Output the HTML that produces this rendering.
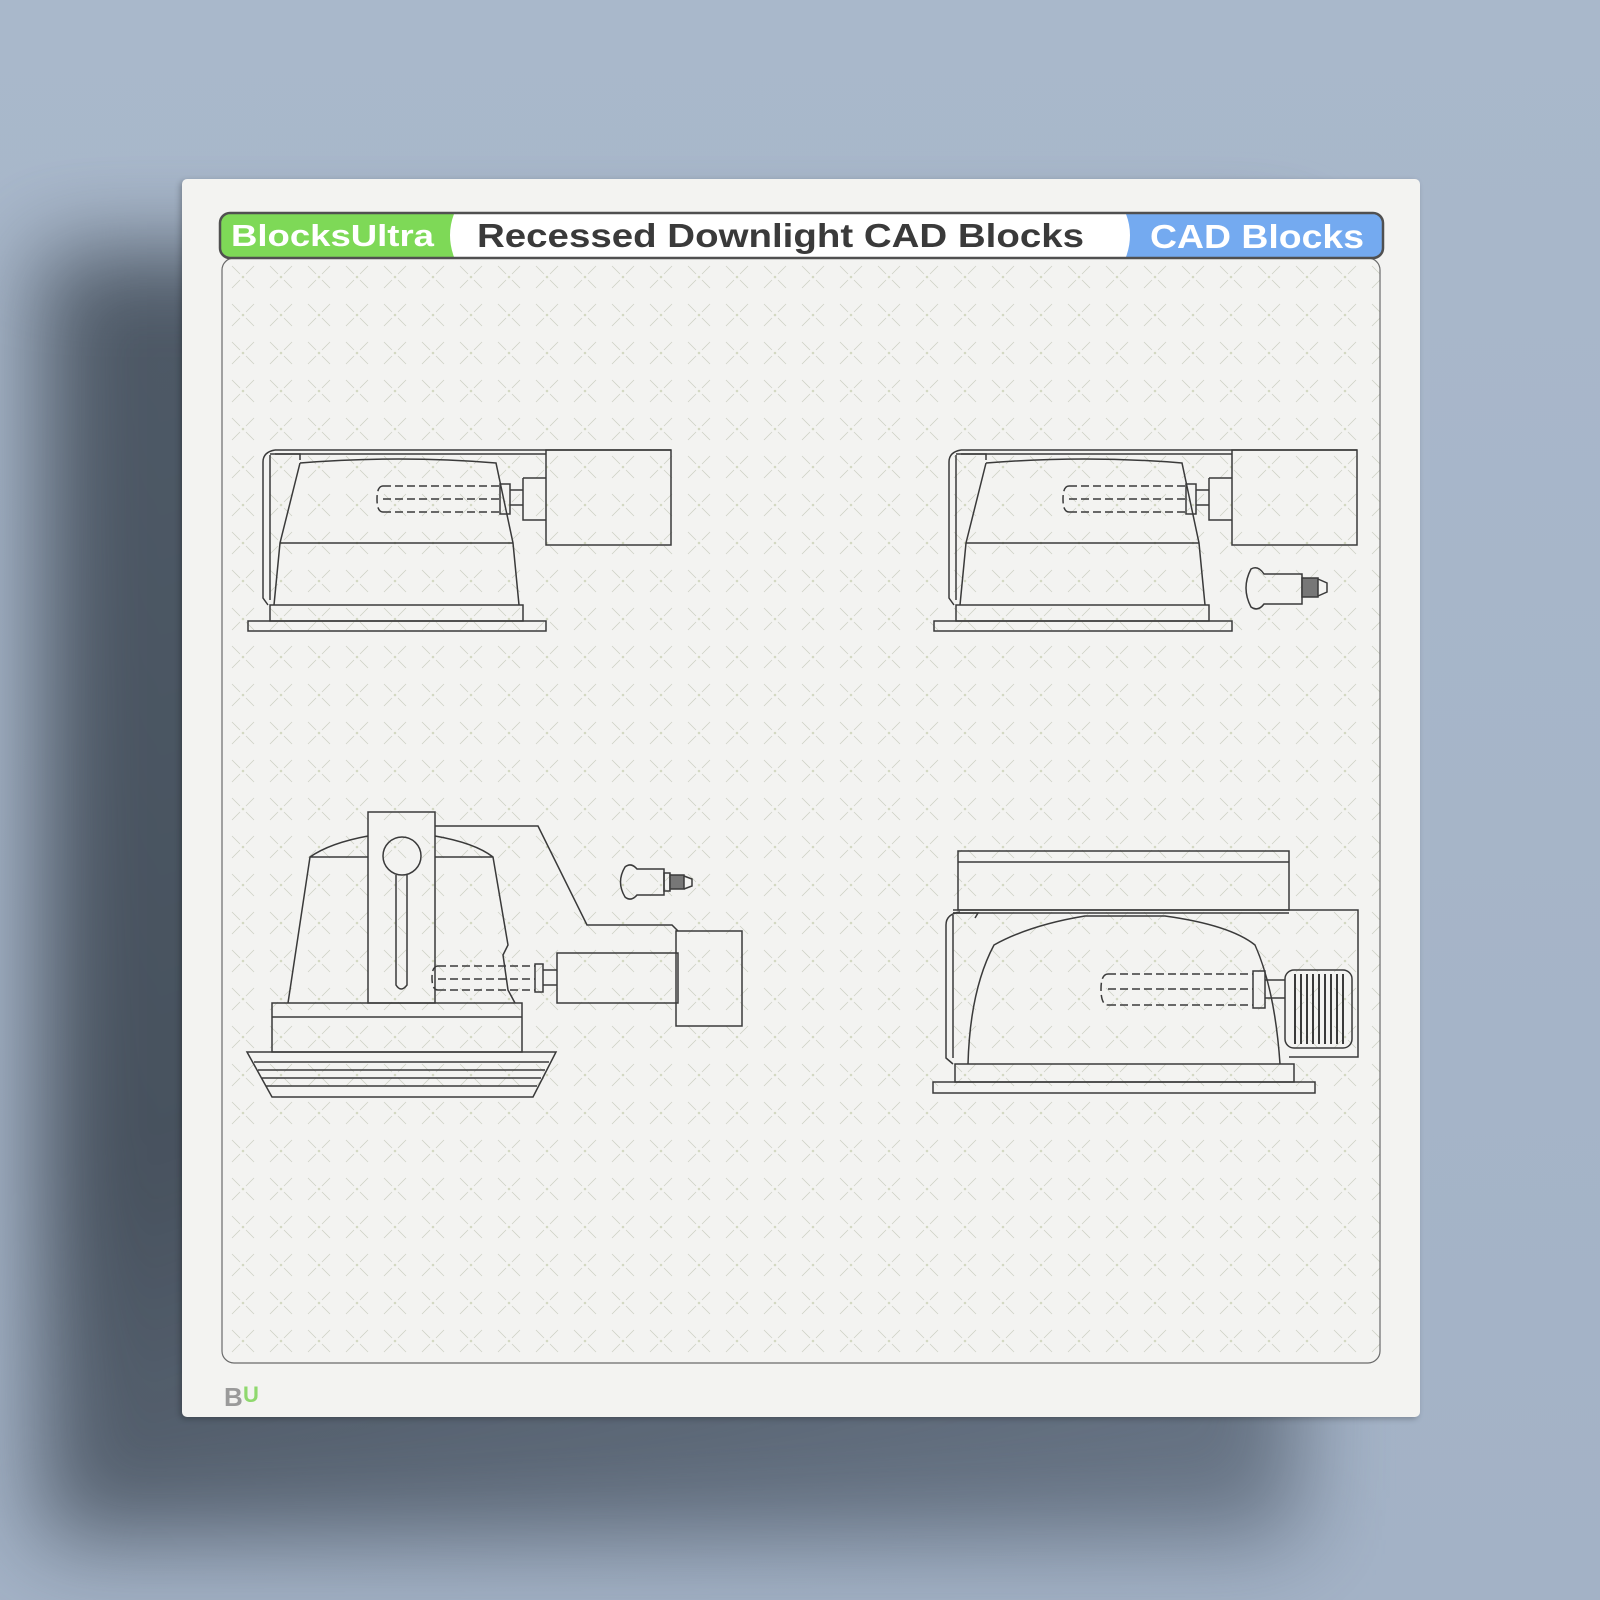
<!DOCTYPE html>
<html><head><meta charset="utf-8"><style>
html,body{margin:0;padding:0}
body{width:1600px;height:1600px;overflow:hidden;position:relative;background:linear-gradient(180deg,#a9b8cb 0%,#a3b2c6 100%);font-family:"Liberation Sans",sans-serif}
.shadow{position:absolute;left:40px;top:250px;width:1260px;height:1290px;background:linear-gradient(160deg,#4a5562 0%,#434d59 55%,rgba(80,92,108,0.7) 100%);filter:blur(45px);opacity:.95}
.card{position:absolute;left:182px;top:179px;width:1238px;height:1238px;background:#f3f3f1;border-radius:5px;box-shadow:-2px 2px 6px rgba(0,0,0,.25)}
svg{position:absolute;left:0;top:0}
</style></head><body>
<div class="shadow"></div>
<div class="card"></div>
<svg width="1600" height="1600" viewBox="0 0 1600 1600">
<defs>
<pattern id="p" x="224" y="258" width="38" height="38" patternUnits="userSpaceOnUse">
<path d="M8 8 L16 16 M22 22 L30 30 M30 8 L22 16 M16 22 L8 30" stroke="#cdd0c4" stroke-width="0.8" fill="none"/>
<circle cx="19" cy="19" r="1.3" fill="#d3d8c2"/>
</pattern>
</defs>
<rect x="222" y="258" width="1158" height="1105" rx="12" fill="url(#p)" stroke="#6a6a6a" stroke-width="1.2"/>
<!-- header -->
<rect x="220" y="213" width="1163" height="45" rx="10" fill="#fff"/>
<path d="M230 214 H454 Q446 235 454 257 H230 Q221 257 221 248 V223 Q221 214 230 214Z" fill="#7ed957"/>
<path d="M1126 214 H1372 Q1382 214 1382 223 V248 Q1382 257 1372 257 H1126 Q1134 235 1126 214Z" fill="#74aaf0"/>
<rect x="220" y="213" width="1163" height="45" rx="10" fill="none" stroke="#505050" stroke-width="2.5"/>
<text x="231" y="246" font-size="31" font-weight="bold" fill="#fff" font-family="Liberation Sans,sans-serif" textLength="203" lengthAdjust="spacingAndGlyphs">BlocksUltra</text>
<text x="477" y="247" font-size="33" font-weight="bold" fill="#3a3a3a" font-family="Liberation Sans,sans-serif" textLength="607" lengthAdjust="spacingAndGlyphs">Recessed Downlight CAD Blocks</text>
<text x="1150" y="248" font-size="33" font-weight="bold" fill="#fff" font-family="Liberation Sans,sans-serif" textLength="214" lengthAdjust="spacingAndGlyphs">CAD Blocks</text>
<!-- logo -->
<text x="224" y="1406" font-size="26" font-weight="bold" fill="#9a9a9a" font-family="Liberation Sans,sans-serif">B</text>
<text x="243" y="1402" font-size="22" font-weight="bold" fill="#8fd86e" font-family="Liberation Sans,sans-serif">U</text>

<g fill="none" stroke="#3a3a3a" stroke-width="1.5">
<!-- top-left -->
<g id="d1">
<path d="M275 450 H671 M275 454 H546"/>
<rect x="546" y="450" width="125" height="95"/>
<path d="M275 450 Q263 452 263 462 V598 L268 605 M270 455 V600 M270 454 L300 454 V460"/>
<path d="M300 463 Q400 455 496 463 L513 543 L519 605 M300 463 L280 543 L274 605 M280 543 H513"/>
<rect x="270" y="605" width="253" height="16"/><rect x="248" y="621" width="298" height="10"/>
<path d="M383 486 H500 M383 499 H500 M383 512 H500 M383 486 Q377 486 377 499 Q377 512 383 512" stroke-dasharray="8 4"/>
<rect x="500" y="484" width="10" height="30"/>
<path d="M510 490 H523 M510 505 H523"/>
<path d="M523 478 H546 M523 478 V520 H546"/>
</g>
<use href="#d1" x="686"/>
<!-- bulb TR -->
<path d="M1264 574 H1302 V604 H1264 Q1258 612 1251 607 Q1241 588 1251 569 Q1258 565 1264 574Z"/>
<rect x="1302" y="578" width="16" height="19" fill="#777"/><path d="M1318 579 L1327 583 V592 L1318 596"/>
<!-- bottom-left -->
<rect x="368" y="812" width="67" height="191"/>
<circle cx="402" cy="856" r="19"/>
<path d="M396 875 V985 Q401 993 407 985 V875"/>
<path d="M368 836 Q330 843 310 857 L288 1003 M310 857 H368 M435 836 Q475 843 493 857 L508 945 L503 955 L508 990 L515 1003 M435 857 H493"/>
<path d="M435 826 H538 L587 925 H672 L678 931"/>
<rect x="557" y="953" width="121" height="50"/><rect x="676" y="931" width="66" height="95"/>
<rect x="272" y="1003" width="250" height="49"/><path d="M272 1017 H522"/>
<path d="M247 1052 H556 L533 1097 H272 Z M254 1062 H549 M258 1070 H545 M262 1078 H541 M266 1086 H537"/>
<path d="M438 966 H535 M438 979 H535 M438 990 H535 M438 966 Q432 966 432 978 Q432 990 438 990" stroke-dasharray="8 4"/>
<rect x="535" y="964" width="8" height="28"/><path d="M543 970 H557 M543 985 H557"/>
<path d="M637 869 H664 V895 H637 Q631 902 625 897 Q616 882 625 867 Q631 862 637 869Z"/>
<rect x="664" y="873" width="6" height="18"/><rect x="670" y="875" width="14" height="14" fill="#777"/><path d="M684 876 L692 879 V886 L684 889"/>
<!-- bottom-right -->
<rect x="958" y="851" width="331" height="59"/><path d="M958 862 H1289"/>
<path d="M953 910 H1358 V1057 H1289 M953 913 H1289"/>
<path d="M960 912 Q946 914 946 925 V1058 L953 1064 M953 915 V1058 M953 913 H978 L975 918"/>
<path d="M968 1064 Q970 990 994 945 Q1030 925 1085 916 H1165 Q1230 925 1255 945 Q1275 990 1280 1064"/>
<rect x="955" y="1064" width="339" height="18"/><rect x="933" y="1082" width="382" height="11"/>
<path d="M1108 974 H1253 M1108 989 H1253 M1108 1005 H1253 M1108 974 Q1101 974 1101 989 Q1101 1005 1108 1005" stroke-dasharray="8 4"/>
<rect x="1253" y="971" width="12" height="37"/><path d="M1265 980 H1285 M1265 998 H1285"/>
<rect x="1285" y="970" width="67" height="78" rx="9"/>
<path d="M1295 974 V1044 M1301 974 V1044 M1307 974 V1044 M1313 974 V1044 M1319 974 V1044 M1325 974 V1044 M1331 974 V1044 M1337 974 V1044 M1343 974 V1044" stroke-width="2"/>
</g>
</svg>
</body></html>
